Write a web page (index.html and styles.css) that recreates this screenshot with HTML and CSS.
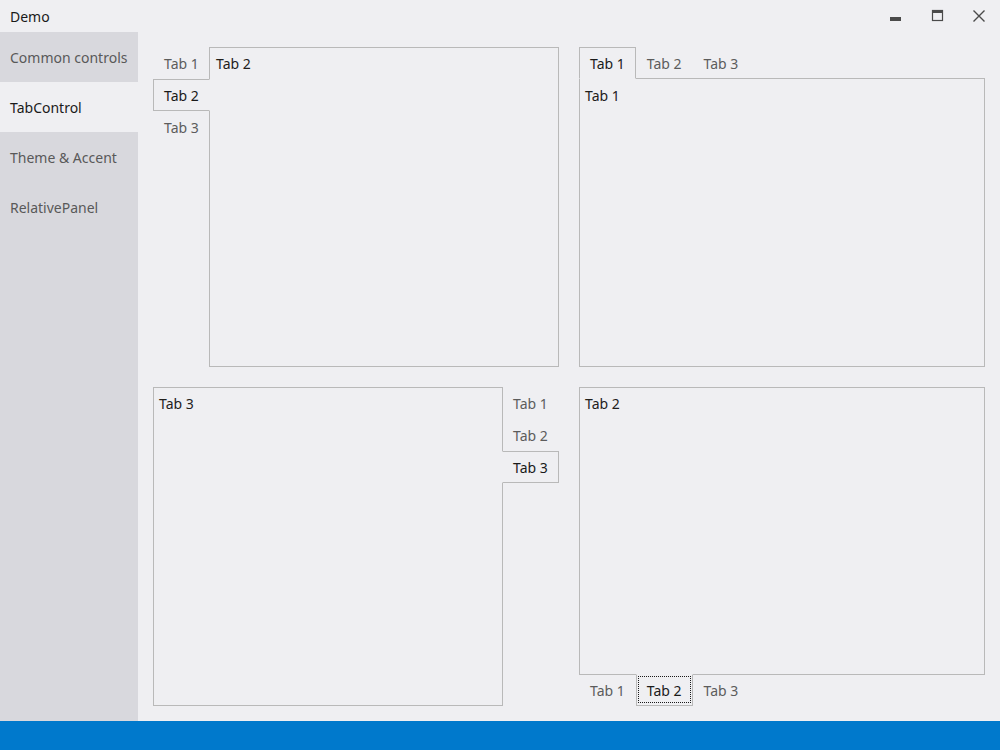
FILE: index.html
```html
<!DOCTYPE html>
<html>
<head>
<meta charset="utf-8">
<link rel="stylesheet" href="styles.css">
</head>
<body>
<div class="window">
  <div class="titlebar">
    <span class="title">Demo</span>
    <div class="controls">
      <svg class="ctl" width="46" height="32" viewBox="0 0 46 32"><rect x="24" y="17" width="11" height="4" fill="#4a4a4a"/></svg>
      <svg class="ctl" width="42" height="32" viewBox="0 0 42 32"><rect x="20.5" y="10.5" width="10" height="10" fill="none" stroke="#4a4a4a" stroke-width="1.2"/><rect x="20" y="10" width="11" height="3" fill="#4a4a4a"/></svg>
      <svg class="ctl" width="46" height="32" viewBox="0 0 46 32"><path d="M19.5 10.5 L30.5 21.5 M30.5 10.5 L19.5 21.5" stroke="#4a4a4a" stroke-width="1.4" fill="none"/></svg>
    </div>
  </div>
  <div class="main">
    <nav class="sidebar">
      <div class="nav-item">Common controls</div>
      <div class="nav-item active">TabControl</div>
      <div class="nav-item">Theme &amp; Accent</div>
      <div class="nav-item">RelativePanel</div>
    </nav>
    <div class="content">
      <div class="tc tc-left">
        <div class="strip">
          <div class="tab">Tab 1</div>
          <div class="tab sel">Tab 2</div>
          <div class="tab">Tab 3</div>
        </div>
        <div class="panel">Tab 2</div>
      </div>
      <div class="tc tc-top">
        <div class="strip">
          <div class="tab sel">Tab 1</div>
          <div class="tab">Tab 2</div>
          <div class="tab">Tab 3</div>
        </div>
        <div class="panel">Tab 1</div>
      </div>
      <div class="tc tc-right">
        <div class="panel">Tab 3</div>
        <div class="strip">
          <div class="tab">Tab 1</div>
          <div class="tab">Tab 2</div>
          <div class="tab sel">Tab 3</div>
        </div>
      </div>
      <div class="tc tc-bottom">
        <div class="panel">Tab 2</div>
        <div class="strip">
          <div class="tab">Tab 1</div>
          <div class="tab sel focus">Tab 2</div>
          <div class="tab">Tab 3</div>
        </div>
      </div>
    </div>
  </div>
  <div class="statusbar"></div>
</div>
</body>
</html>
```

FILE: styles.css
```css
html, body {
  margin: 0;
  padding: 0;
}
body {
  font-family: "Noto Sans", "Open Sans", sans-serif;
  font-size: 14px;
  line-height: 20px;
  color: #1e1e1e;
  background: #efeff2;
}
.window {
  width: 1000px;
  height: 750px;
  display: flex;
  flex-direction: column;
  overflow: hidden;
}
.titlebar {
  height: 32px;
  display: flex;
  align-items: center;
  justify-content: space-between;
  padding-left: 10px;
  flex: none;
}
.title {
  color: #1a1a1a;
  margin-top: 1px;
}
.controls {
  display: flex;
  height: 32px;
}
.ctl {
  display: block;
}
.main {
  flex: 1;
  display: flex;
  min-height: 0;
}
.sidebar {
  width: 138px;
  background: #d8d8dd;
  flex: none;
}
.nav-item {
  height: 50px;
  box-sizing: border-box;
  display: flex;
  align-items: center;
  padding: 2px 0 0 10px;
  color: #595959;
  white-space: nowrap;
}
.nav-item.active {
  background: #efeff2;
  color: #1a1a1a;
}
.content {
  flex: 1;
  display: grid;
  grid-template-columns: 406px 406px;
  grid-template-rows: 320px 319px;
  gap: 20px;
  padding: 15px 15px 15px 15px;
}
.statusbar {
  height: 29px;
  background: #0079cc;
  flex: none;
}

.tc {
  display: flex;
  min-width: 0;
  min-height: 0;
}
.tc-left, .tc-right {
  flex-direction: row;
}
.tc-top, .tc-bottom {
  flex-direction: column;
}
.strip {
  display: flex;
  flex: none;
}
.tc-left .strip, .tc-right .strip {
  flex-direction: column;
  width: 57px;
}
.tc-left .strip { margin-right: -1px; }
.tc-right .strip { margin-left: -1px; }
.tc-top .strip { margin-bottom: -1px; }
.tc-bottom .strip { margin-top: -1px; }

.panel {
  flex: 1;
  border: 1px solid #b9b9b9;
  padding: 6px 5px;
  color: #22201c;
  min-width: 0;
  min-height: 0;
}
.tc-left .panel {
  padding-left: 6px;
}
.tc-top .panel {
  padding-top: 7px;
}
.tab {
  height: 32px;
  box-sizing: border-box;
  border: 1px solid transparent;
  padding: 2px 10px 0 10px;
  display: flex;
  align-items: center;
  color: #5c5c5c;
  white-space: nowrap;
}
.tab.sel {
  position: relative;
  z-index: 1;
  border-color: #b9b9b9;
  background: #efeff2;
  color: #1a1a1a;
}
.tc-left .tab.sel { border-right-color: #efeff2; }
.tc-right .tab.sel { border-left-color: #efeff2; }
.tc-top .tab.sel { border-bottom-color: #efeff2; }
.tc-bottom .tab.sel { border-top-color: #efeff2; }

.tab.focus::after {
  content: "";
  position: absolute;
  top: 1px;
  left: 1px;
  right: 1px;
  bottom: 2px;
  border: 1px dotted #1a1a1a;
}
```
